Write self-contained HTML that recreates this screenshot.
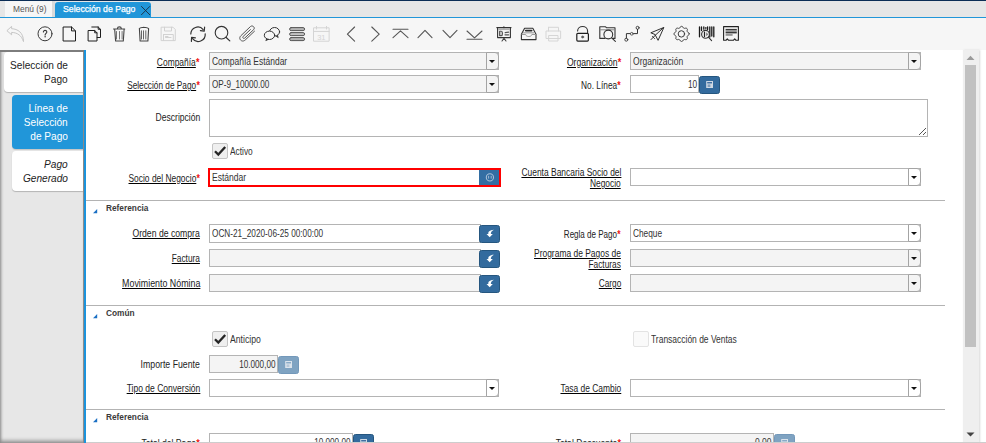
<!DOCTYPE html><html><head><meta charset="utf-8"><style>
*{box-sizing:border-box;margin:0;padding:0}
html,body{width:986px;height:443px;overflow:hidden;background:#fff;font-family:"Liberation Sans",sans-serif;position:relative}
.a{position:absolute}
.t{position:absolute;white-space:nowrap;font-size:10px;line-height:12px;color:#333}
.r{transform-origin:100% 0}
.l{transform-origin:0 0}
.u{text-decoration:underline;text-decoration-color:#000;text-underline-offset:1px}
.t b{color:#f01010;font-size:10.5px;position:relative;top:-0.5px;margin-left:0.3px}
.fld{position:absolute;border:1px solid #b4b4b4;background:#fff}
.ro{background:#f4f4f4}
.dd{position:absolute;width:13px;top:-1px;bottom:-1px;right:-1px;border:1px solid #a4a4a4;border-radius:0 4px 4px 0;background:inherit}
.dd:after{content:"";position:absolute;left:2.3px;top:7px;border-left:3px solid transparent;border-right:3px solid transparent;border-top:3px solid #111}
.btn{position:absolute;background:#336b9e;border:1px solid #25567f;border-radius:2.5px}
.btn svg{position:absolute;left:-1px;top:-1px}
.btn.dis{background:#7fa3c2;border-color:#7398ba}
.sec{position:absolute;left:86px;width:859px;height:1px;background:#b3b3b3}
.hd{position:absolute;font-size:8.3px;font-weight:bold;color:#3a3a3a;white-space:nowrap;line-height:11px}
.cb{position:absolute;width:16px;height:16px;border:1px solid #c4c4c4;border-radius:2px;background:#efefef}
</style></head><body>
<div class="a" style="left:0;top:0;width:986px;height:1px;background:#0b2d55"></div>
<div class="a" style="left:0;top:1px;width:986px;height:16px;background:#e6e6e6"></div>
<div class="a" style="left:5px;top:1px;width:47px;height:16px;background:#f6f6f6"></div>
<div class="a" style="left:52px;top:1px;width:3px;height:16px;background:#dadada"></div>
<div class="a" style="left:13px;top:3px;font-size:8.4px;line-height:12px;color:#555;white-space:nowrap">Menú (9)</div>
<div class="a" style="left:55px;top:2px;width:96px;height:15px;background:#2196d9;border-radius:3px 3px 0 0"></div>
<div class="a" style="left:63px;top:3px;font-size:8.7px;line-height:12px;color:#fff;white-space:nowrap;-webkit-text-stroke:0.25px #fff">Selección de Pago</div>
<svg class="a" style="left:140px;top:4px" width="12" height="13" viewBox="0 0 12 13"><path d="M1.2 2.2 L10 11 M10 2.2 L1.2 11" stroke="#1b3146" stroke-width="0.95"/></svg>
<div class="a" style="left:0;top:17px;width:986px;height:1px;background:#2196d9"></div>
<div class="a" style="left:0;top:18px;width:986px;height:32px;background:#f6f6f6"></div>
<svg class="a" style="left:0;top:0" width="986" height="50" viewBox="0 0 986 50" fill="none" stroke-linecap="round" stroke-linejoin="round">
<!-- undo -->
<path d="M7.2 30.4 L11.6 26.4 L11.6 28.7 C17.5 28.9 23.6 32.5 23.5 41.6 C21.5 35.5 17.5 32.6 11.6 32.4 L11.6 34.4 Z" stroke="#c6c6c6" stroke-width="1"/>
<!-- help -->
<circle cx="45" cy="33.8" r="7" stroke="#3a3a3a" stroke-width="1"/>
<path d="M43.4 32 C43.3 29.9 46.8 29.9 46.8 31.9 C46.8 33.3 45.1 33.4 45.1 35.1" stroke="#3a3a3a" stroke-width="1.1"/>
<circle cx="45.1" cy="36.8" r="0.75" fill="#3a3a3a" stroke="none"/>
<!-- new -->
<path d="M63.5 27 L71.6 27 L75.5 30.9 L75.5 41 L63.5 41 Z M71.5 27 L71.5 30.9 L75.5 30.9" stroke="#1e1e1e" stroke-width="1"/>
<!-- copy -->
<path d="M91.8 27 L98.2 27 L100.5 29.3 L100.5 37.5 L97.2 37.5" stroke="#1e1e1e" stroke-width="1"/>
<path d="M98.2 27 L98.2 29.3 L100.5 29.3" stroke="#1e1e1e" stroke-width="1"/>
<path d="M88.5 30.5 L94.7 30.5 L97 32.8 L97 41 L88.5 41 Z M94.7 30.5 L94.7 32.8 L97 32.8" stroke="#1e1e1e" stroke-width="1"/>
<!-- trash 1 -->
<path d="M113.5 29 L124.7 29 M117.3 28.8 C117.6 26.2 121.2 26.2 121.4 28.8 M114.7 29.5 L115.6 41 L123.3 41 L124.1 29.5" stroke="#444" stroke-width="1.1"/>
<path d="M116.5 31.5 L116.5 39 M119.5 31.5 L119.5 39 M122.1 31.5 L122.1 39" stroke="#666" stroke-width="0.9"/>
<!-- trash 2 -->
<path d="M139.3 28.6 C140.5 27.2 142.5 27.8 143.8 27.2 C145.2 27.8 147.2 27 148.6 28.6 M139.4 28.8 L140.1 41 L147.9 41 L148.6 28.8" stroke="#444" stroke-width="1.1"/>
<path d="M141.5 30.8 L141.5 39 M143.5 30.8 L143.5 39 M145.8 30.8 L145.8 39" stroke="#555" stroke-width="0.9"/>
<!-- save disabled -->
<path d="M161.5 27.2 L173 27.2 L175.3 29.5 L175.3 40.6 L161.5 40.6 Z M164.5 27.2 L164.5 31 L171.5 31 L171.5 27.2 M163.5 34.5 L173.3 34.5 L173.3 40.6 M163.5 34.5 L163.5 40.6 M165.5 36.5 L168 36.5 M165.5 37.5 L171 37.5" stroke="#d2d2d2" stroke-width="1"/>
<!-- refresh -->
<path d="M190.8 34 A7 7 0 0 1 203.2 29.6" stroke="#333" stroke-width="1.2"/>
<path d="M204.6 27.2 L204.2 31.2 L200.4 30.6" stroke="#333" stroke-width="1.2"/>
<path d="M205.2 33.8 A7 7 0 0 1 192.6 38.6" stroke="#333" stroke-width="1.2"/>
<path d="M191.4 41.4 L191.6 37.4 L195.4 37.8" stroke="#333" stroke-width="1.2"/>
<!-- search -->
<circle cx="221.5" cy="32.7" r="6.3" stroke="#333" stroke-width="1.1"/>
<path d="M225.9 37.3 L229.8 40.9" stroke="#333" stroke-width="1.2"/>
<!-- attach -->
<path d="M254.5 31.2 L245.2 40 C242 43 237.8 38.8 240.8 35.8 L250.5 26.5 C252.5 24.8 255.5 27.5 253.7 29.6 L244.8 38 C243.6 39.2 242 37.6 243.2 36.4 L250.4 29.6" stroke="#555" stroke-width="1"/>
<!-- chat -->
<ellipse cx="274.6" cy="31.8" rx="5" ry="4.3" fill="#f6f6f6" stroke="#333" stroke-width="1"/>
<path d="M277.6 35.4 L278.2 37.6 L276.2 36.2" fill="#333" stroke="#333" stroke-width="0.8"/>
<ellipse cx="269.5" cy="35.3" rx="5.2" ry="4.2" fill="#f6f6f6" stroke="#333" stroke-width="1"/>
<path d="M266.8 38.7 L265.8 40.6 L268.4 39.4" fill="#333" stroke="#333" stroke-width="0.8"/>
<!-- grid bars -->
<rect x="289.6" y="27.6" width="15" height="3" rx="1.5" fill="#b5b5b5" stroke="#555" stroke-width="1"/>
<rect x="289.6" y="32.6" width="15" height="3" rx="1.5" fill="#c3c3c3" stroke="#555" stroke-width="1"/>
<rect x="289.6" y="37.6" width="15" height="3" rx="1.5" fill="#b5b5b5" stroke="#555" stroke-width="1"/>
<!-- calendar disabled -->
<path d="M313.9 27.8 L329.1 27.8 L329.1 41.2 L313.9 41.2 Z M313.9 31.4 L329.1 31.4 M316.5 26.4 L316.5 29 M326.5 26.4 L326.5 29" stroke="#d4d4d4" stroke-width="1"/>
<text x="317.2" y="39.6" font-family="Liberation Sans" font-size="7.5" fill="#d4d4d4" stroke="none">31</text>
<!-- prev / next -->
<path d="M354.6 27 L347.4 34.1 L354.6 41.2" stroke="#555" stroke-width="1.1"/>
<path d="M371.8 27 L379.2 34.1 L371.8 41.2" stroke="#555" stroke-width="1.1"/>
<!-- first -->
<path d="M393 29.3 L408 29.3 M393 37.6 L400.5 30.8 L408 37.6" stroke="#555" stroke-width="1.1"/>
<!-- up -->
<path d="M418 37.6 L425 30.4 L432 37.6" stroke="#555" stroke-width="1.1"/>
<!-- down -->
<path d="M443 30.4 L450 37.6 L457 30.4" stroke="#555" stroke-width="1.1"/>
<!-- last -->
<path d="M467 31 L474.5 37.8 L482 31 M467 39.3 L482 39.3" stroke="#555" stroke-width="1.1"/>
<!-- presentation -->
<path d="M496.8 27.6 L511 27.6 M497.6 27.6 L497.6 37.6 L510.4 37.6 L510.4 27.6" stroke="#333" stroke-width="1.1"/>
<path d="M503.9 26.8 L503.9 28" stroke="#333" stroke-width="1.2"/>
<path d="M502 41 L504 38.4 L506 41" stroke="#444" stroke-width="1.1"/>
<rect x="498.2" y="28.3" width="11.6" height="1.8" fill="#b0b0b0" stroke="none"/>
<path d="M499.6 31.2 L501.2 31.2 C503 31.2 503 35.6 501.2 35.6 L499.6 35.6 Z" stroke="#555" stroke-width="1.1" fill="#cfcfcf"/>
<path d="M505.2 32.6 L508.6 32.2 M505 34.8 L508.6 34.8" stroke="#555" stroke-width="1.2"/>
<!-- archive -->
<path d="M524.6 28.2 L532.8 28.2 L536 34.2 L536 39.6 L521.4 39.6 L521.4 34.2 Z" stroke="#333" stroke-width="1.1"/>
<path d="M525.8 30.6 L531.6 30.6" stroke="#2a2a2a" stroke-width="1.8"/>
<path d="M523.6 32.8 L533.8 32.8" stroke="#b5b5b5" stroke-width="1.4"/>
<path d="M522 34.5 L525.6 34.5 C526 37.2 531.5 37.2 531.9 34.5 L535.5 34.5" stroke="#999" stroke-width="1"/>
<!-- print disabled -->
<path d="M548.5 27.3 L558.5 27.3 L558.5 31 M548.5 27.3 L548.5 31 M546.4 31 L560.6 31 L560.6 38.5 L546.4 38.5 Z M549 35.5 L558 35.5 L558 41 L549 41 Z" stroke="#d6d6d6" stroke-width="1"/>
<!-- lock open -->
<path d="M577.6 31 C577.6 25 587.6 25 587.6 31 L587.6 33" stroke="#333" stroke-width="1.1"/>
<rect x="576.8" y="33.3" width="11.6" height="7.8" rx="1" stroke="#1e1e1e" stroke-width="1.2"/>
<circle cx="582.6" cy="37" r="1.1" fill="#555" stroke="#555" stroke-width="0.6"/>
<!-- folder zoom -->
<path d="M605 38.4 L599.8 38.4 L599.8 26.8 L605.6 26.8 L606.6 27.8 L615 27.8 L615 38.4 L612.6 38.4" stroke="#333" stroke-width="1.1"/>
<path d="M600.2 29.8 L614.6 29.8" stroke="#888" stroke-width="1"/>
<circle cx="608.3" cy="34.5" r="4.4" stroke="#333" stroke-width="1.1"/>
<path d="M611.6 37.8 L615.4 41.4" stroke="#333" stroke-width="1.1"/>
<!-- workflow -->
<path d="M626.4 38.2 L626.4 33.6 L630.4 33.6 M633.2 33.6 L637.5 33.6 L637.5 29.4" stroke="#333" stroke-width="1"/>
<circle cx="626.3" cy="39.7" r="1.5" stroke="#333" stroke-width="0.9"/>
<circle cx="631.8" cy="33.8" r="1.4" stroke="#555" stroke-width="0.9"/>
<circle cx="637.6" cy="27.8" r="1.5" stroke="#333" stroke-width="0.9"/>
<!-- send -->
<path d="M663.5 27.6 L650.8 32.8 L655 34.5 L657.9 40 Z M663.5 27.6 L655 35.5 M655 35.5 L651 39.6 M652.5 36.5 L654.5 38.5" stroke="#333" stroke-width="1"/>
<!-- gear -->
<path d="M689.15 33.90 L689.11 34.27 L688.98 34.63 L688.76 34.96 L688.32 35.24 L687.86 35.47 L687.61 35.72 L687.42 35.98 L687.28 36.25 L687.19 36.54 L687.14 36.86 L687.14 37.22 L687.30 37.71 L687.42 38.21 L687.33 38.61 L687.17 38.95 L686.94 39.24 L686.65 39.47 L686.31 39.63 L685.91 39.72 L685.41 39.60 L684.92 39.44 L684.56 39.44 L684.24 39.49 L683.95 39.58 L683.68 39.72 L683.42 39.91 L683.17 40.16 L682.94 40.62 L682.66 41.06 L682.33 41.28 L681.97 41.41 L681.60 41.45 L681.23 41.41 L680.87 41.28 L680.54 41.06 L680.26 40.62 L680.03 40.16 L679.78 39.91 L679.52 39.72 L679.25 39.58 L678.96 39.49 L678.64 39.44 L678.28 39.44 L677.79 39.60 L677.29 39.72 L676.89 39.63 L676.55 39.47 L676.26 39.24 L676.03 38.95 L675.87 38.61 L675.78 38.21 L675.90 37.71 L676.06 37.22 L676.06 36.86 L676.01 36.54 L675.92 36.25 L675.78 35.98 L675.59 35.72 L675.34 35.47 L674.88 35.24 L674.44 34.96 L674.22 34.63 L674.09 34.27 L674.05 33.90 L674.09 33.53 L674.22 33.17 L674.44 32.84 L674.88 32.56 L675.34 32.33 L675.59 32.08 L675.78 31.82 L675.92 31.55 L676.01 31.26 L676.06 30.94 L676.06 30.58 L675.90 30.09 L675.78 29.59 L675.87 29.19 L676.03 28.85 L676.26 28.56 L676.55 28.33 L676.89 28.17 L677.29 28.08 L677.79 28.20 L678.28 28.36 L678.64 28.36 L678.96 28.31 L679.25 28.22 L679.52 28.08 L679.78 27.89 L680.03 27.64 L680.26 27.18 L680.54 26.74 L680.87 26.52 L681.23 26.39 L681.60 26.35 L681.97 26.39 L682.33 26.52 L682.66 26.74 L682.94 27.18 L683.17 27.64 L683.42 27.89 L683.68 28.08 L683.95 28.22 L684.24 28.31 L684.56 28.36 L684.92 28.36 L685.41 28.20 L685.91 28.08 L686.31 28.17 L686.65 28.33 L686.94 28.56 L687.17 28.85 L687.33 29.19 L687.42 29.59 L687.30 30.09 L687.14 30.58 L687.14 30.94 L687.19 31.26 L687.28 31.55 L687.42 31.82 L687.61 32.08 L687.86 32.33 L688.32 32.56 L688.76 32.84 L688.98 33.17 L689.11 33.53 Z" stroke="#3a3a3a" stroke-width="1"/>
<circle cx="681.4" cy="33.9" r="3.2" stroke="#3a3a3a" stroke-width="1"/>
<!-- barcode zoom -->
<path d="M699.5 27 L699.5 36.8 M701.5 27 L701.5 30.5 M703.8 27 L703.8 29.2 M707.6 27 L707.6 29.5 M709.8 27 L709.8 37 M711.8 27 L711.8 36 M713.8 27 L713.8 36.8" stroke="#1a1a1a" stroke-width="1.3"/>
<rect x="705" y="27" width="1.6" height="2.4" fill="#555" stroke="none"/>
<circle cx="705.5" cy="34.3" r="3.9" fill="#f2f2f2" stroke="#333" stroke-width="1.1"/>
<path d="M704.5 32 L704.5 36.6" stroke="#222" stroke-width="1.2"/>
<path d="M706.2 32.3 L708.2 34.3 L706.2 36.3 Z" fill="#777" stroke="none"/>
<path d="M708.4 37.2 L711.6 40.6" stroke="#333" stroke-width="1.1"/>
<!-- receipt -->
<path d="M723.6 26.6 L738.4 26.6 L738.4 40.2 L735.8 40.2 L734.7 38.9 L733.6 40.2 L728.4 40.2 L727.3 38.9 L726.2 40.2 L723.6 40.2 Z" stroke="#222" stroke-width="1.1"/>
<rect x="725.6" y="28.9" width="11.2" height="1.5" fill="#3a3a3a" stroke="none"/>
<rect x="725.6" y="30.5" width="11.2" height="1.3" fill="#8a8a8a" stroke="none"/>
<rect x="725.6" y="31.9" width="11.2" height="1.5" fill="#3a3a3a" stroke="none"/>
<rect x="725.6" y="34.4" width="7" height="1.1" fill="#555" stroke="none"/>
</svg>

<div class="a" style="left:0;top:50px;width:84px;height:393px;background:#e7e7e7;box-shadow:inset 3px 0 3px -2px #8a8a8a, inset 0 -4px 4px -2px #858585"></div>
<div class="a" style="left:83px;top:50px;width:1px;height:393px;background:#8c8c8c"></div>
<div class="a" style="left:0;top:50px;width:84px;height:2px;background:#7d7d7d"></div>
<div class="a" style="left:4px;top:52px;width:79px;height:40px;background:#fff;border-radius:4px 0 0 4px;box-shadow:0 1px 1px rgba(0,0,0,.22)"></div>
<div class="a" style="left:12px;top:95px;width:71px;height:54px;background:#2196d9;border-radius:4px 0 0 4px;box-shadow:0 1px 1px rgba(0,0,0,.15)"></div>
<div class="a" style="left:12px;top:151px;width:71px;height:40px;background:#fff;border-radius:4px 0 0 4px;box-shadow:0 1px 1px rgba(0,0,0,.22)"></div>
<div class="t r" style="right:918px;top:59px;font-size:11px;line-height:13px;color:#222;transform:scaleX(0.92);">Selección de</div>
<div class="t r" style="right:918px;top:73px;font-size:11px;line-height:13px;color:#222;transform:scaleX(0.92);">Pago</div>
<div class="t r" style="right:918px;top:102px;font-size:11px;line-height:13px;color:#fff;transform:scaleX(0.92);">Línea de</div>
<div class="t r" style="right:918px;top:116px;font-size:11px;line-height:13px;color:#fff;transform:scaleX(0.92);">Selección</div>
<div class="t r" style="right:918px;top:130px;font-size:11px;line-height:13px;color:#fff;transform:scaleX(0.92);">de Pago</div>
<div class="t r" style="right:918px;top:158px;font-size:11px;line-height:13px;color:#222;transform:scaleX(0.92);font-style:italic;">Pago</div>
<div class="t r" style="right:918px;top:172px;font-size:11px;line-height:13px;color:#222;transform:scaleX(0.92);font-style:italic;">Generado</div>
<div class="a" style="left:84px;top:50px;width:2px;height:393px;background:#1b93dc"></div>
<div class="t r" style="right:786px;top:56px;color:#222;transform:scaleX(0.8452)"><span class="u">Compañía</span><b>*</b></div>
<div class="fld ro" style="left:209px;top:52px;width:290px;height:18px"><div class="dd"></div></div>
<div class="t l" style="left:212px;top:56px;color:#333;transform:scaleX(0.8454)">Compañía Estándar</div>
<div class="t r" style="right:365px;top:56px;color:#222;transform:scaleX(0.8588)"><span class="u">Organización</span><b>*</b></div>
<div class="fld ro" style="left:630px;top:52px;width:291px;height:18px"><div class="dd"></div></div>
<div class="t l" style="left:633px;top:56px;color:#333;transform:scaleX(0.852)">Organización</div>
<div class="t r" style="right:786px;top:79px;color:#222;transform:scaleX(0.8273)"><span class="u">Selección de Pago</span><b>*</b></div>
<div class="fld ro" style="left:209px;top:75px;width:290px;height:18px"><div class="dd"></div></div>
<div class="t l" style="left:212px;top:79px;color:#333;transform:scaleX(0.8113)">OP-9_10000.00</div>
<div class="t r" style="right:365px;top:79px;color:#222;transform:scaleX(0.83)">No. Línea<b>*</b></div>
<div class="fld" style="left:630px;top:75px;width:69px;height:18px"></div>
<div class="t r" style="right:289px;top:79px;color:#333;transform:scaleX(0.827)">10</div>
<div class="btn" style="left:699px;top:76px;width:21px;height:18px"><svg width="21" height="18" viewBox="0 0 21 18"><rect x="7.2" y="5" width="6.8" height="7" fill="#cfd9e4"/><rect x="8.2" y="6.1" width="4.8" height="1.3" fill="#2f639a"/><rect x="8.6" y="8.4" width="2.8" height="2.6" fill="#7f9dbb"/></svg></div>
<div class="t r" style="right:786px;top:112px;color:#222;transform:scaleX(0.8555)">Descripción</div>
<div class="fld" style="left:209px;top:99px;width:719px;height:38px"></div>
<svg class="a" style="left:918px;top:127px" width="9" height="9"><rect x="1" y="7" width="1" height="1" fill="#555"/><rect x="2" y="6" width="1" height="1" fill="#555"/><rect x="3" y="5" width="1" height="1" fill="#555"/><rect x="4" y="4" width="1" height="1" fill="#555"/><rect x="5" y="3" width="1" height="1" fill="#555"/><rect x="6" y="2" width="1" height="1" fill="#555"/><rect x="7" y="1" width="1" height="1" fill="#555"/><rect x="5" y="7" width="1" height="1" fill="#555"/><rect x="6" y="6" width="1" height="1" fill="#555"/><rect x="7" y="5" width="1" height="1" fill="#555"/></svg>
<div class="cb" style="left:212px;top:143px;"></div>
<svg class="a" style="left:212px;top:143px" width="16" height="16"><path d="M3 8.2 L6.3 11.6 L13.2 4" stroke="#262626" stroke-width="2.3" fill="none"/></svg>
<div class="t l" style="left:230px;top:146px;color:#333;transform:scaleX(0.8335)">Activo</div>
<div class="t r" style="right:786px;top:172px;color:#222;transform:scaleX(0.8411)"><span class="u">Socio del Negocio</span><b>*</b></div>
<div class="a" style="left:208px;top:168px;width:293px;height:19px;border:2px solid #f00;background:#fff"></div>
<div class="a" style="left:479px;top:170px;width:20px;height:15px;background:#336ea3"><svg width="20" height="15"><circle cx="10.9" cy="7.4" r="3.6" stroke="#a9c0d8" stroke-width="1.1" fill="none"/><path d="M9.6 5.8 L9.6 8.6 M12.2 5.8 L12.2 8.6" stroke="#a9c0d8" stroke-width="0.9"/></svg></div>
<div class="t l" style="left:212px;top:172px;color:#333;transform:scaleX(0.8543)">Estándar</div>
<div class="t r" style="right:365px;top:167px;color:#222;transform:scaleX(0.8444)"><span class="u">Cuenta Bancaria Socio del</span></div>
<div class="t r" style="right:365px;top:178px;color:#222;transform:scaleX(0.8392)"><span class="u">Negocio</span></div>
<div class="fld" style="left:630px;top:168px;width:291px;height:18px"><div class="dd"></div></div>
<div class="sec" style="top:200px"></div>
<svg class="a" style="left:92px;top:208px" width="6" height="6"><path d="M1 5.2 L5.2 5.2 L5.2 1 Z" fill="#1a6fc4"/></svg>
<div class="hd" style="left:106px;top:203px">Referencia</div>
<div class="t r" style="right:786px;top:228px;color:#222;transform:scaleX(0.866)"><span class="u">Orden de compra</span></div>
<div class="fld" style="left:209px;top:224px;width:272px;height:19px"></div>
<div class="t l" style="left:212px;top:228px;color:#333;transform:scaleX(0.8231)">OCN-21_2020-06-25 00:00:00</div>
<div class="btn" style="left:479px;top:225px;width:21px;height:18px"><svg width="21" height="18" viewBox="0 0 21 18"><path d="M14.9 4.7 C10.6 4.8 8.8 7 9.4 9.1 L7.5 9.1 L10.7 12.3 L13.8 9.1 L11.9 9.1 C11.6 7.4 12.6 5.9 14.9 4.7 Z" fill="#fff"/></svg></div>
<div class="t r" style="right:786px;top:253px;color:#222;transform:scaleX(0.8317)"><span class="u">Factura</span></div>
<div class="fld ro" style="left:209px;top:249px;width:272px;height:18px"></div>
<div class="btn" style="left:479px;top:250px;width:21px;height:18px"><svg width="21" height="18" viewBox="0 0 21 18"><path d="M14.9 4.7 C10.6 4.8 8.8 7 9.4 9.1 L7.5 9.1 L10.7 12.3 L13.8 9.1 L11.9 9.1 C11.6 7.4 12.6 5.9 14.9 4.7 Z" fill="#fff"/></svg></div>
<div class="t r" style="right:786px;top:278px;color:#222;transform:scaleX(0.886)"><span class="u">Movimiento Nómina</span></div>
<div class="fld ro" style="left:209px;top:274px;width:272px;height:18px"></div>
<div class="btn" style="left:479px;top:275px;width:21px;height:18px"><svg width="21" height="18" viewBox="0 0 21 18"><path d="M14.9 4.7 C10.6 4.8 8.8 7 9.4 9.1 L7.5 9.1 L10.7 12.3 L13.8 9.1 L11.9 9.1 C11.6 7.4 12.6 5.9 14.9 4.7 Z" fill="#fff"/></svg></div>
<div class="t r" style="right:365px;top:228px;color:#222;transform:scaleX(0.804)">Regla de Pago<b>*</b></div>
<div class="fld" style="left:630px;top:224px;width:291px;height:18px"><div class="dd"></div></div>
<div class="t l" style="left:633px;top:228px;color:#333;transform:scaleX(0.8307)">Cheque</div>
<div class="t r" style="right:365px;top:248px;color:#222;transform:scaleX(0.844)"><span class="u">Programa de Pagos de</span></div>
<div class="t r" style="right:365px;top:259px;color:#222;transform:scaleX(0.8353)"><span class="u">Facturas</span></div>
<div class="fld ro" style="left:630px;top:249px;width:291px;height:18px"><div class="dd"></div></div>
<div class="t r" style="right:365px;top:278px;color:#222;transform:scaleX(0.8257)"><span class="u">Cargo</span></div>
<div class="fld ro" style="left:630px;top:274px;width:291px;height:18px"><div class="dd"></div></div>
<div class="sec" style="top:305px"></div>
<svg class="a" style="left:92px;top:313px" width="6" height="6"><path d="M1 5.2 L5.2 5.2 L5.2 1 Z" fill="#1a6fc4"/></svg>
<div class="hd" style="left:106px;top:308px">Común</div>
<div class="cb" style="left:212px;top:331px;"></div>
<svg class="a" style="left:212px;top:331px" width="16" height="16"><path d="M3 8.2 L6.3 11.6 L13.2 4" stroke="#262626" stroke-width="2.3" fill="none"/></svg>
<div class="t l" style="left:230px;top:334px;color:#333;transform:scaleX(0.8657)">Anticipo</div>
<div class="cb" style="left:633px;top:331px;background:#fafafa;border-color:#e3e3e3"></div>
<div class="t l" style="left:651px;top:334px;color:#333;transform:scaleX(0.8465)">Transacción de Ventas</div>
<div class="t r" style="right:786px;top:359px;color:#222;transform:scaleX(0.873)">Importe Fuente</div>
<div class="fld ro" style="left:209px;top:355px;width:69px;height:18px"></div>
<div class="t r" style="right:711px;top:359px;color:#333;transform:scaleX(0.8157)">10.000,00</div>
<div class="btn dis" style="left:278px;top:356px;width:21px;height:18px"><svg width="21" height="18" viewBox="0 0 21 18"><rect x="7.2" y="5" width="6.8" height="7" fill="#dbe3ec"/><rect x="8.2" y="6.1" width="4.8" height="1.3" fill="#7fa3c2"/><rect x="8.6" y="8.4" width="2.8" height="2.6" fill="#b4c6d8"/></svg></div>
<div class="t r" style="right:786px;top:383px;color:#222;transform:scaleX(0.8536)"><span class="u">Tipo de Conversión</span></div>
<div class="fld" style="left:209px;top:379px;width:290px;height:18px"><div class="dd"></div></div>
<div class="t r" style="right:365px;top:383px;color:#222;transform:scaleX(0.8413)"><span class="u">Tasa de Cambio</span></div>
<div class="fld" style="left:630px;top:379px;width:291px;height:18px"><div class="dd"></div></div>
<div class="sec" style="top:409px"></div>
<svg class="a" style="left:92px;top:417px" width="6" height="6"><path d="M1 5.2 L5.2 5.2 L5.2 1 Z" fill="#1a6fc4"/></svg>
<div class="hd" style="left:106px;top:412px">Referencia</div>
<div class="t r" style="right:786px;top:437px;color:#222;transform:scaleX(0.8613)">Total del Pago<b>*</b></div>
<div class="fld" style="left:209px;top:433px;width:144px;height:18px"></div>
<div class="t r" style="right:636px;top:437px;color:#333;transform:scaleX(0.8157)">10.000,00</div>
<div class="btn" style="left:353px;top:434px;width:21px;height:18px"><svg width="21" height="18" viewBox="0 0 21 18"><rect x="7.2" y="5" width="6.8" height="7" fill="#cfd9e4"/><rect x="8.2" y="6.1" width="4.8" height="1.3" fill="#2f639a"/><rect x="8.6" y="8.4" width="2.8" height="2.6" fill="#7f9dbb"/></svg></div>
<div class="t r" style="right:365px;top:437px;color:#222;transform:scaleX(0.8603)">Total Descuento<b>*</b></div>
<div class="fld ro" style="left:630px;top:433px;width:144px;height:18px"></div>
<div class="t r" style="right:215px;top:437px;color:#333;transform:scaleX(0.8475)">0,00</div>
<div class="btn dis" style="left:774px;top:434px;width:21px;height:18px"><svg width="21" height="18" viewBox="0 0 21 18"><rect x="7.2" y="5" width="6.8" height="7" fill="#dbe3ec"/><rect x="8.2" y="6.1" width="4.8" height="1.3" fill="#7fa3c2"/><rect x="8.6" y="8.4" width="2.8" height="2.6" fill="#b4c6d8"/></svg></div>
<div class="a" style="left:963px;top:50px;width:16px;height:393px;background:#efefef;box-shadow:1px 0 2px #d8d8d8"></div>
<div class="a" style="left:965px;top:65px;width:11px;height:282px;background:#c1c1c1"></div>
<svg class="a" style="left:963px;top:50px" width="16" height="393"><path d="M3.5 10 L11.5 10 L7.5 5.8 Z" fill="#9a9a9a"/><path d="M3.5 382.6 L11.5 382.6 L7.5 386.6 Z" fill="#444"/></svg>
<div class="a" style="left:86px;top:442px;width:900px;height:1px;background:#cdcdcd"></div>
</body></html>
